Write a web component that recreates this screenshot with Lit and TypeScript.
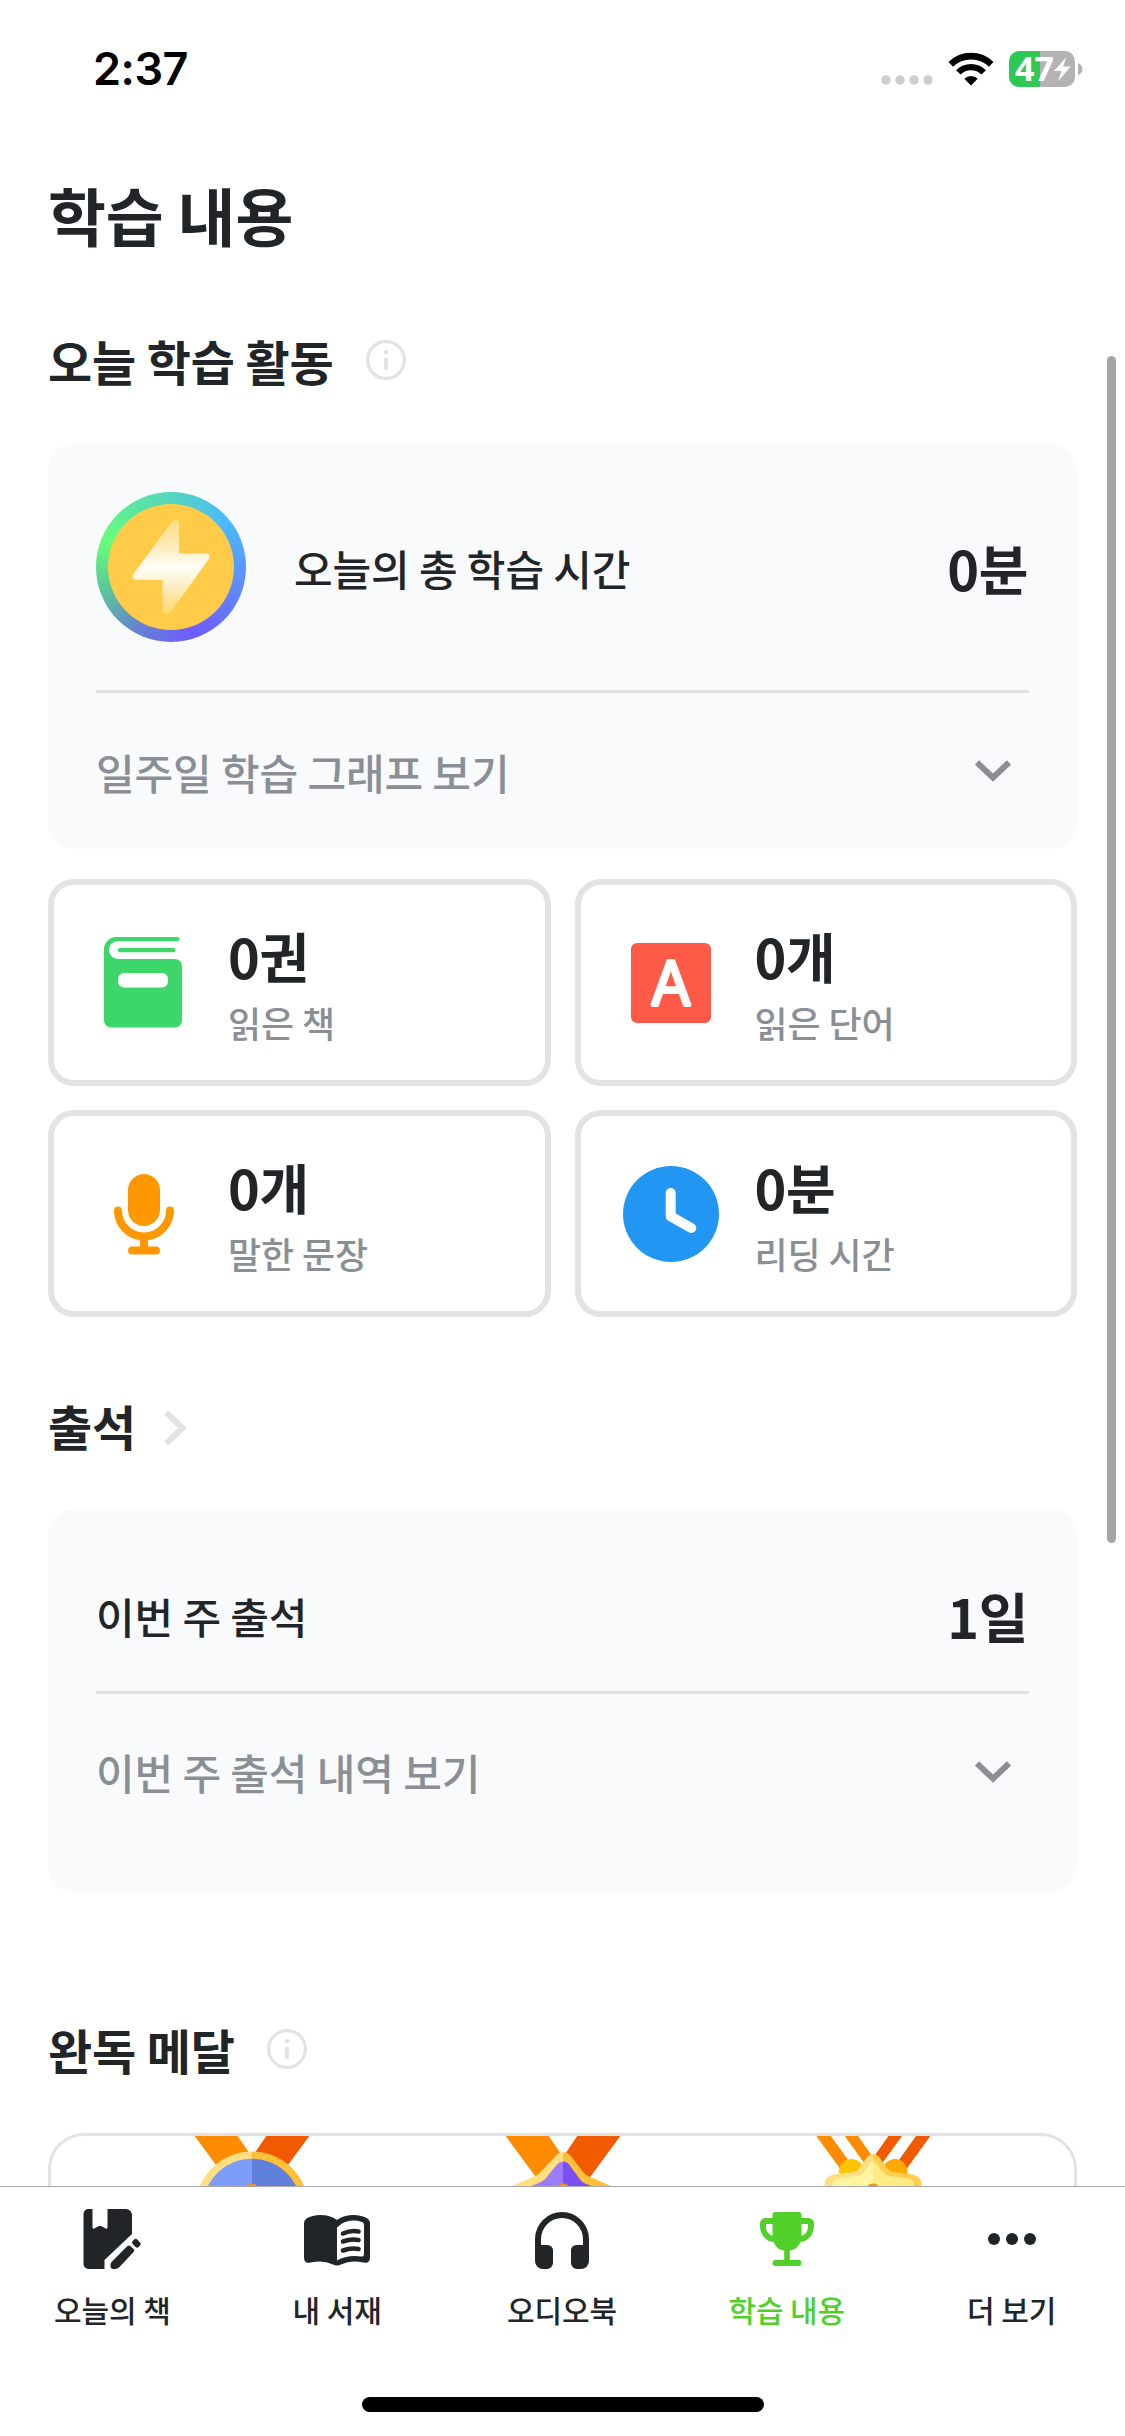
import { LitElement, html, css, svg } from "lit";
import { customElement, property } from "lit/decorators.js";
import { classMap } from "lit/directives/class-map.js";

const infoIcon = html`<svg width="40" height="40" viewBox="0 0 40 40" fill="none">
  <circle cx="20" cy="20" r="18.4" stroke="#e1e3e5" stroke-width="3.2" />
  <circle cx="20" cy="12" r="2.3" fill="#e1e3e5" />
  <path d="M20 18v12" stroke="#e1e3e5" stroke-width="3.8" />
</svg>`;

const chevronRight = html`<svg class="chevron-right" width="24" height="36" viewBox="0 0 24 36" fill="none">
  <path d="M2 2.500 18.500 18 2 33.500" stroke="#e1e3e5" stroke-width="6" />
</svg>`;

const chevronDown = html`<svg width="36" height="22" viewBox="0 0 36 22" fill="none">
  <path d="M2 2.4 18 17.6 34 2.4" stroke="#8a8f92" stroke-width="6" />
</svg>`;

const bookStat = html`<svg width="96" height="96" viewBox="0 0 96 96">
  <path fill="#3dd66b" d="M20 2H81.500a2.100 2.100 0 0 1 0 4.300H21.500A8.500 8.500 0 0 0 13 15A8.800 8.800 0 0 0 21.500 24H79a7 7 0 0 1 7 7V85.500a7 7 0 0 1-7 7H15a7 7 0 0 1-7-7V15A12.500 12.500 0 0 1 20 2z" />
  <path d="M24 15.200H77.500" stroke="#3dd66b" stroke-width="4.200" stroke-linecap="round" />
  <rect x="22" y="38" width="50" height="14.500" rx="6" fill="#fff" />
</svg>`;

const wordStat = html`<svg width="96" height="96" viewBox="0 0 96 96">
  <rect x="8" y="8" width="80" height="80" rx="6" fill="#ff5a48" />
  <text class="letter" x="48" y="70" text-anchor="middle">A</text>
</svg>`;

const micStat = html`<svg width="96" height="96" viewBox="0 0 96 96" fill="none" stroke="#ff9800" stroke-width="8" stroke-linecap="round">
  <rect x="32" y="8" width="32" height="52" rx="16" fill="#ff9800" stroke="none" />
  <path d="M22 44.500a26 26 0 0 0 52 0M48 71v13M36 84.500h24" />
</svg>`;

const clockStat = html`<svg width="96" height="96" viewBox="0 0 96 96" fill="none">
  <circle cx="48" cy="48" r="48" fill="#2196f3" />
  <path d="M47.700 27v23.300L68.300 62" stroke="#fff" stroke-width="10" stroke-linecap="round" stroke-linejoin="round" />
</svg>`;

interface Stat { value: string; label: string; icon: unknown; }

const STATS: Stat[] = [
  { value: "0권", label: "읽은 책", icon: bookStat },
  { value: "0개", label: "읽은 단어", icon: wordStat },
  { value: "0개", label: "말한 문장", icon: micStat },
  { value: "0분", label: "리딩 시간", icon: clockStat },
];

const wideRibbons = (end: number) => svg`
  <path fill="#ff8c00" d="M2.700 0H45.700L62 24 ${2.700 + end * 0.735} ${end}z" />
  <path fill="#f25a00" d="M117.300 0H74.300L58 24 ${117.300 - end * 0.735} ${end}z" />`;

const roundMedal = html`<svg width="120" height="60" viewBox="0 0 120 60">
  ${wideRibbons(34)}
  <path fill="#ffdf80" d="M60 15.500A56.500 56.500 0 0 0 3.500 72H60z" />
  <path fill="#ffc038" d="M60 15.500A56.500 56.500 0 0 1 116.500 72H60z" />
  <path fill="#7c9dfc" d="M60 22.700A49.300 49.300 0 0 0 10.700 72H60z" />
  <path fill="#5f80db" d="M60 22.700A49.300 49.300 0 0 1 109.300 72H60z" />
  <ellipse cx="60" cy="52" rx="6" ry="4.500" fill="#e8961e" />
</svg>`;

const starMedal = html`<svg width="120" height="60" viewBox="0 0 120 60">
  ${wideRibbons(46)}
  <path fill="#ffdf80" d="M60 16.300C56.500 16.300 54.500 17.800 52.500 20L38 35.800Q35.500 38.500 32 40L9 50V60H60z" />
  <path fill="#ffc038" d="M60 16.300C63.500 16.300 66 18 67.800 20L80 35.800Q82.500 39 86 40.500L108 50V60H60z" />
  <path fill="#9c7bfd" d="M60 25.500Q56.500 25.500 54 28.500L43 42Q41 44.500 38 46L26 51V60H60z" />
  <path fill="#7a50f5" d="M60 25.500Q64 25.500 66.500 29L77 43.500Q79 46 82 47.500L91 51V60H60z" />
  <ellipse cx="60" cy="52" rx="6" ry="4.500" fill="#e8961e" />
</svg>`;

const goldMedal = html`<svg width="120" height="60" viewBox="0 0 120 60">
  <path fill="#ff8c00" d="M3.300 0H18L45 38H31zM31.700 0H45L62 24V42z" />
  <path fill="#f25a00" d="M117.300 0H103L76 38H90zM89 0H75.500L58.500 24V42z" />
  <circle cx="38.500" cy="35.500" r="12.500" fill="#ffc400" />
  <circle cx="82" cy="35.500" r="12.500" fill="#ffa800" />
  <path fill="#ffdf80" d="M60 18Q56.500 18 54 21.500L46.500 32Q44.500 35 40.500 36L24 38C14 39 10.500 44 12 52V60H60z" />
  <path fill="#ffcf50" d="M60 18Q64 18 66.500 21.500L74 32Q76 35 80 36L96.500 38C106 39 110 44 108.500 52V60H60z" />
  <path fill="#fff4a0" d="M60 25.500Q58 25.500 56 28.500L50.500 36Q48.500 39 45 39.700L26 42.500C21 43.500 19 46 19.500 52V60H60z" />
  <path fill="#ffea85" d="M60 25.500Q62 25.500 64 28.500L70 36Q72 39 75.500 39.700L94.500 42.500C99.500 43.500 101.500 46 101 52V60H60z" />
  <ellipse cx="60" cy="52" rx="6" ry="4.500" fill="#e39a1c" />
</svg>`;

const MEDALS = [roundMedal, starMedal, goldMedal];

const todayIcon = html`<svg width="72" height="72" viewBox="0 0 72 72" fill="currentColor">
  <path d="M12.500 6H16.500V24.500Q16.500 26 18.300 25.500L23 23.100Q24 22.600 25 23.100L29.700 25.500Q31.500 26 31.500 24.500V6H50a6 6 0 0 1 6 6V31L28.500 57V66H12.500a5 5 0 0 1-5-5V11a5 5 0 0 1 5-5z" />
  <path d="M51.200 43.300Q52.700 41.600 54.300 43.100L57.600 46Q59 47.400 57.600 49L43.500 64Q41.500 66 39 66H37.500Q34.500 66 34.500 63V61.500Q34.500 60 35.500 59z" />
  <path d="M58.200 36.600Q59.700 35 61.200 36.500L64.100 39.600Q65.500 41.100 64.100 42.600L62.600 44.100Q61.100 45.500 59.600 44L56.600 41.100Q55.200 39.600 56.700 38.100z" />
</svg>`;

const libraryIcon = html`<svg width="72" height="72" viewBox="0 0 72 72" fill="currentColor">
  <path d="M36 17C28 10.500 13 10.500 5.500 15.500Q3 17 3 20V54Q3 61 9.500 59.500Q22 56.500 32 61.500Q36 63.500 40 61.500Q50 56.500 62.500 59.500Q69 61 69 54V20Q69 17 66.500 15.500C59 10.500 44 10.500 36 17zM36 24.500Q46 14.500 61 19Q63 19.700 63 22V51Q63 54 60.500 53.500Q46 51.500 36 57.500z" fill-rule="evenodd" />
  <path d="M42 30.500Q50 27 57.500 28.500M42 38.500Q50 35.500 57.500 37M42 47.500Q50 44.500 57.500 46" fill="none" stroke="currentColor" stroke-width="4.600" stroke-linecap="round" />
</svg>`;

const audioIcon = html`<svg width="72" height="72" viewBox="0 0 72 72" fill="currentColor">
  <path d="M9 36a27 27 0 0 1 54 0V58a8 8 0 0 1-8 8H51a6 6 0 0 1-6-6V47.500a5.500 5.500 0 0 1 5.500-5.500H57V36a21 21 0 0 0-42 0V42H21.500a5.500 5.500 0 0 1 5.500 5.500V60a6 6 0 0 1-6 6H17a8 8 0 0 1-8-8z" />
</svg>`;

const trophyIcon = html`<svg width="72" height="72" viewBox="0 0 72 72" fill="currentColor">
  <path d="M24.500 9H47.500a3 3 0 0 1 3 3V15H57.500a5.500 5.500 0 0 1 5.500 5.500V23C63 31.500 57 38.500 49.500 39C47.500 44 43.500 47 38.800 47.500V57H47.500a3 3 0 0 1 0 6H24.500a3 3 0 0 1 0-6H33.200V47.500C28.500 47 24.500 44 22.500 39C15 38.500 9 31.500 9 23V20.500A5.500 5.500 0 0 1 14.500 15H21.500V12a3 3 0 0 1 3-3zM21.500 21H15V24C15 28 17.500 31.500 21.500 33zM50.500 21V33C54.500 31.500 57 28 57 24V21z" fill-rule="evenodd" />
</svg>`;

const moreIcon = html`<svg width="72" height="72" viewBox="0 0 72 72" fill="currentColor">
  <circle cx="18" cy="36" r="6" /><circle cx="36" cy="36" r="6" /><circle cx="54" cy="36" r="6" />
</svg>`;

const TABS = [
  { label: "오늘의 책", icon: todayIcon, active: false },
  { label: "내 서재", icon: libraryIcon, active: false },
  { label: "오디오북", icon: audioIcon, active: false },
  { label: "학습 내용", icon: trophyIcon, active: true },
  { label: "더 보기", icon: moreIcon, active: false },
];

@customElement("status-bar")
class StatusBar extends LitElement {
  static styles = css`
    :host { display: flex; height: 132px; padding: 6px 42px 0 93px; box-sizing: border-box; align-items: center; justify-content: space-between; color: #000; }
    .time { font: 600 45px/54px Inter, sans-serif; letter-spacing: -0.5px; }
    .indicators { display: flex; align-items: center; }
    svg { display: block; overflow: visible; }
    .signal { margin: 22px 15px 0 0; }
    .wifi { margin-right: 15px; }
    .level { font: 700 34px "Noto Sans", sans-serif; fill: #fff; }
  `;
  render() {
    return html`
      <div class="time">2:37</div>
      <div class="indicators">
        <svg class="signal" width="52" height="10" viewBox="0 0 52 10" fill="#cecece">
          <circle cx="5" cy="5" r="4.700" /><circle cx="19" cy="5" r="4.700" /><circle cx="33" cy="5" r="4.700" /><circle cx="47" cy="5" r="4.700" />
        </svg>
        <svg class="wifi" width="46" height="34" viewBox="0 0 46 34" fill="none" stroke="#000">
          <path d="M2.800 12.300A29 29 0 0 1 43.200 12.300" stroke-width="6.600" />
          <path d="M10.300 20.400A18 18 0 0 1 35.700 20.400" stroke-width="6.200" />
          <path d="M23 33.500 16.300 26.800A9.500 9.500 0 0 1 29.700 26.800z" fill="#000" stroke="none" />
        </svg>
        <svg width="74" height="36" viewBox="0 0 74 36">
          <path d="M10 0H31V36H10A10 10 0 0 1 0 26V10A10 10 0 0 1 10 0z" fill="#30c855" />
          <path d="M31 0H56A10 10 0 0 1 66 10V26A10 10 0 0 1 56 36H31z" fill="#b3b3b3" />
          <path d="M69 12Q73.500 14 73.500 18T69 24z" fill="#b3b3b3" />
          <text class="level" x="6" y="30.300">47</text>
          <path d="M57.500 6 45 20H52.500L49 30.500 61.500 15.500H54z" fill="#fff" />
        </svg>
      </div>`;
  }
}

@customElement("stat-card")
class StatCard extends LitElement {
  @property() value = "";
  @property() label = "";
  @property({ attribute: false }) icon: unknown;
  static styles = css`
    :host { display: flex; height: 207px; box-sizing: border-box; border: 6px solid #e1e3e4; border-radius: 26px; padding-left: 42px; gap: 36px; align-items: center; }
    svg { display: block; }
    .value { font-size: 54px; letter-spacing: -0.4px; line-height: 79px; font-weight: 700; color: #222528; }
    .label { font-size: 36px; letter-spacing: -0.1px; line-height: 55px; font-weight: 500; color: #8a8f96; }
    .letter { font: 300 60px Inter, sans-serif; fill: #fff; stroke: #fff; stroke-width: 4px; stroke-linejoin: round; }
  `;
  render() {
    return html`${this.icon}
      <div><div class="value">${this.value}</div><div class="label">${this.label}</div></div>`;
  }
}

@customElement("tab-bar")
class TabBar extends LitElement {
  static styles = css`
    :host { display: flex; flex-direction: column; height: 250px; box-sizing: border-box; border-top: 1px solid #a8a8a8; background: #fff; padding-bottom: 24px; align-items: center; justify-content: space-between; flex: none; }
    .tabs { display: grid; grid-template-columns: repeat(5, 1fr); width: 100%; box-sizing: border-box; padding: 16px 1px 0 0; }
    .tab { display: flex; flex-direction: column; align-items: center; gap: 14px; font-size: 30px; line-height: 40px; font-weight: 500; letter-spacing: -0.1px; color: #222528; }
    .tab.active { color: #52d02a; }
    svg { display: block; }
    .home { width: 402px; height: 15px; border-radius: 8px; background: #000; }
  `;
  render() {
    return html`
      <div class="tabs">
        ${TABS.map((t) => html`<div class=${classMap({ tab: true, active: t.active })}>${t.icon}<span>${t.label}</span></div>`)}
      </div>
      <div class="home"></div>`;
  }
}

@customElement("app-root")
class AppRoot extends LitElement {
  static styles = css`
    :host { display: flex; flex-direction: column; position: relative; width: 1125px; height: 2436px; overflow: hidden; background: #fff; color: #222528; font-family: "Noto Sans CJK KR", sans-serif; }
    svg { display: block; }
    main { flex: 1; min-height: 0; overflow: hidden; padding: 0 48px; }
    h1 { margin: 0; font-size: 63px; letter-spacing: -0.2px; line-height: 163px; font-weight: 700; }
    h2 { margin: 0 0 20px; display: flex; align-items: center; gap: 32px; height: 129px; font-size: 48px; letter-spacing: -0.15px; font-weight: 700; }
    .chevron-right { margin: 6px 0 0 -4px; }
    .panel { background: #f9fafc; border-radius: 26px; padding: 0 48px; }
    .time-panel { padding-top: 48px; margin-bottom: 30px; }
    .attendance-panel { padding-top: 30px; padding-bottom: 43px; margin-bottom: 92px; }
    .summary { display: flex; align-items: center; gap: 48px; height: 150px; font-size: 42px; letter-spacing: -0.1px; font-weight: 500; }
    .time-panel .summary { padding-bottom: 48px; }
    .attendance-panel .summary { height: 152px; }
    .total { margin-left: auto; padding-right: 1px; font-size: 54px; letter-spacing: -0.4px; font-weight: 700; }
    .more { display: flex; align-items: center; justify-content: space-between; height: 156px; padding-right: 18px; border-top: 3px solid #e0e2e4; font-size: 42px; letter-spacing: -0.1px; font-weight: 500; color: #8a8f96; }
    .attendance-panel .more { height: 155px; }
    .coin { display: grid; place-items: center; width: 150px; height: 150px; border-radius: 50%; background: conic-gradient(#55d6be 0deg, #4bb9ff 52deg, #5b94ff 95deg, #6f5aff 162deg, #6484cf 210deg, #5cc49c 250deg, #66ff79 292deg, #5ae8a0 325deg, #55d6be 360deg); }
    .coin-face { display: grid; place-items: center; width: 126px; height: 126px; border-radius: 50%; background: #ffcb49; }
    .stats { display: grid; grid-template-columns: 1fr 1fr; gap: 24px; margin-bottom: 43px; }
    .medals { display: flex; justify-content: center; height: 300px; border: 3px solid #e1e3e4; border-radius: 36px; }
    .medal { display: flex; justify-content: center; width: 310.500px; }
    .scrollbar { position: absolute; top: 356px; right: 9px; width: 9px; height: 1187px; border-radius: 5px; background: #a5a5a5; }
  `;
  render() {
    return html`
      <status-bar></status-bar>
      <main>
        <h1>학습 내용</h1>
        <h2>오늘 학습 활동 ${infoIcon}</h2>
        <section class="panel time-panel">
          <div class="summary">
            <div class="coin"><div class="coin-face">
              <svg width="80" height="98" viewBox="0 0 80 98">
                <defs><linearGradient id="shine" x1="0" y1="0" x2="0" y2="1">
                  <stop offset="0" stop-color="#ffdc80" /><stop offset="0.280" stop-color="#ffebb8" /><stop offset="0.500" stop-color="#fffefa" /><stop offset="0.720" stop-color="#ffedc0" /><stop offset="1" stop-color="#ffd566" />
                </linearGradient></defs>
                <path d="M48 4.500V35.500H75Q80 36 77.700 41L39.500 94.500Q34 99 31.500 94V62H5Q0 61 2.500 56L41.500 3Q46 -1 48 4.500z" fill="url(#shine)" />
              </svg>
            </div></div>
            <span>오늘의 총 학습 시간</span>
            <span class="total">0분</span>
          </div>
          <div class="more"><span>일주일 학습 그래프 보기</span>${chevronDown}</div>
        </section>
        <div class="stats">
          ${STATS.map((s) => html`<stat-card .value=${s.value} .label=${s.label} .icon=${s.icon}></stat-card>`)}
        </div>
        <h2>출석 ${chevronRight}</h2>
        <section class="panel attendance-panel">
          <div class="summary"><span>이번 주 출석</span><span class="total">1일</span></div>
          <div class="more"><span>이번 주 출석 내역 보기</span>${chevronDown}</div>
        </section>
        <h2>완독 메달 ${infoIcon}</h2>
        <div class="medals">${MEDALS.map((m) => html`<div class="medal">${m}</div>`)}</div>
      </main>
      <tab-bar></tab-bar>
      <div class="scrollbar"></div>`;
  }
}
